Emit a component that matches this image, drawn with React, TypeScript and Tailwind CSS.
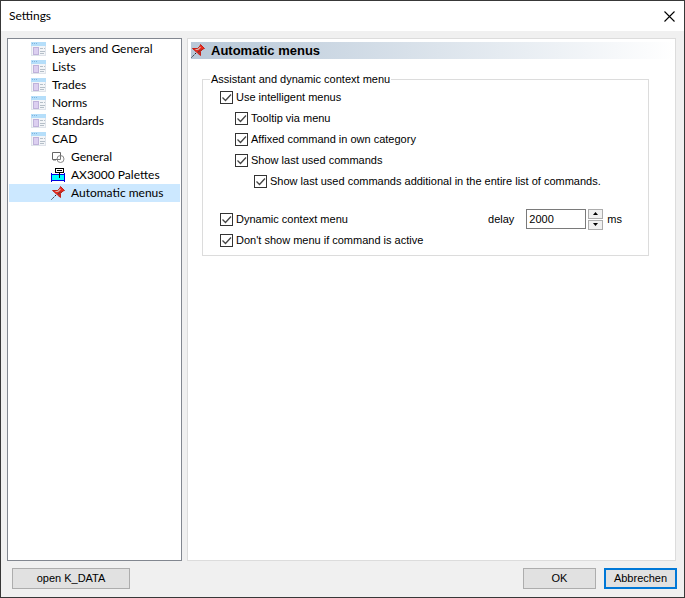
import { useState } from "react";
import type { ReactNode } from "react";

function WindowIcon() {
  return (
    <svg width="15" height="14" viewBox="0 0 15 14" shapeRendering="crispEdges" className="shrink-0">
      <rect width="15" height="14" fill="#dfe3ea" />
      <rect width="15" height="4" fill="#b5defa" />
      <rect x="1" y="1" width="1" height="1" fill="#7fb5dc" />
      <rect x="3" y="1" width="1" height="1" fill="#7fb5dc" />
      <rect x="5" y="1" width="1" height="1" fill="#7fb5dc" />
      <rect x="1" y="4" width="13" height="9" fill="#f3f5f8" />
      <rect x="2" y="5" width="6" height="8" fill="#bfb2da" />
      <rect x="3" y="6" width="4" height="6" fill="#dccff0" />
      <rect x="9" y="6" width="3" height="1" fill="#b5bfc8" />
      <rect x="13" y="6" width="1" height="1" fill="#b5bfc8" />
      <rect x="9" y="9" width="5" height="1" fill="#b5bfc8" />
      <rect x="9" y="11" width="4" height="1" fill="#b5bfc8" />
    </svg>
  );
}

function ShapesIcon() {
  return (
    <svg width="14" height="14" viewBox="0 0 14 14" fill="none" className="shrink-0">
      <path d="M1.5 2.5h8v7h-8z" fill="#fff" stroke="#666" />
      <path d="M2 10.5h3" stroke="#bbb" />
      <circle cx="9.5" cy="9" r="3.5" fill="#fff" stroke="#888" />
      <path d="M9.5 5v4.5H6" stroke="#777" />
    </svg>
  );
}

function PaletteIcon() {
  return (
    <svg width="14" height="14" viewBox="0 0 14 14" shapeRendering="crispEdges" className="shrink-0">
      <rect x="1" y="7" width="12" height="5" fill="#00ffff" />
      <path d="M0 6h14v1H0zM0 12h14v1H0zM0 5h1v9H0zM13 5h1v9h-1z" fill="#0000e0" />
      <rect x="4" y="0" width="9" height="5" fill="#000" />
      <rect x="5" y="1" width="7" height="3" fill="#fff" />
      <rect x="6" y="2" width="5" height="1" fill="#000" />
      <rect x="8" y="5" width="1" height="5" fill="#000" />
    </svg>
  );
}

function PinIcon() {
  return (
    <svg width="14" height="14" viewBox="0 0 14 14" className="shrink-0">
      <path d="M0.5 13.5L5 9" stroke="#222" strokeDasharray="1.5 1" />
      <path d="M9.5 .5L13.5 4.5 12 5 9.5 7.5 9.5 11.5 6.5 9 5 7.5 1.5 4.5 6.5 4.5 9 2z" fill="#ee2a1c" stroke="#c01810" strokeWidth=".9" />
      <path d="M9.5 3L7 5.5 4.5 5.5" fill="none" stroke="#d8b0a8" strokeWidth="1.2" />
      <path d="M11.5 4.5L8.5 7.5V9.5L6.5 7.5z" fill="#6b3a38" />
    </svg>
  );
}

const tree = [
  { label: "Layers and General", icon: <WindowIcon /> },
  { label: "Lists", icon: <WindowIcon /> },
  { label: "Trades", icon: <WindowIcon /> },
  { label: "Norms", icon: <WindowIcon /> },
  { label: "Standards", icon: <WindowIcon /> },
  { label: "CAD", icon: <WindowIcon /> },
  { label: "General", icon: <ShapesIcon />, child: true },
  { label: "AX3000 Palettes", icon: <PaletteIcon />, child: true },
  { label: "Automatic menus", icon: <PinIcon />, child: true },
];

function Check({ children, className = "" }: { children: ReactNode; className?: string }) {
  return (
    <label className={`flex h-[21px] items-center gap-[3px] whitespace-nowrap ${className}`}>
      <span className="relative size-[13px] shrink-0">
        <input type="checkbox" defaultChecked className="peer block size-[13px] appearance-none border border-[#333] bg-white" />
        <svg
          viewBox="0 0 13 13"
          fill="none"
          className="pointer-events-none absolute inset-0 hidden size-[13px] peer-checked:block"
        >
          <path d="M2.5 6.5l3 3 5.5-6" stroke="#444" strokeWidth="1.3" />
        </svg>
      </span>
      {children}
    </label>
  );
}

export default function App() {
  const [selected, setSelected] = useState("Automatic menus");
  const [delay, setDelay] = useState(2000);

  return (
    <div className="flex h-screen flex-col border border-[#383838] bg-[#f0f0f0] font-['Liberation_Sans',Arial,sans-serif] text-[11px] text-black">
      <header className="flex h-[30px] shrink-0 items-center justify-between bg-white pr-[5px] pl-2">
        <h1 className="font-[Lato,'Open_Sans',sans-serif] text-[12px]">Settings</h1>
        <button type="button" aria-label="Close" className="p-1">
          <svg width="11" height="11" viewBox="0 0 11 11">
            <path d="M.5 .5l10 10M10.5 .5l-10 10" stroke="#000" strokeWidth="1.1" />
          </svg>
        </button>
      </header>

      <div className="flex min-h-0 flex-1 gap-[5px] pt-[7px] pr-2 pl-1.5">
        <nav className="w-[175px] shrink-0 border border-[#828790] bg-white p-px font-[Lato,'Open_Sans',sans-serif] text-[12px]">
          <ul>
            {tree.map((item) => (
              <li key={item.label}>
                <button
                  type="button"
                  onClick={() => setSelected(item.label)}
                  className={`flex h-[18px] w-full items-center gap-1.5 whitespace-nowrap ${
                    item.child ? "pl-[42px]" : "pl-[22px]"
                  } ${selected === item.label ? "bg-[#cce8ff]" : ""}`}
                >
                  {item.icon}
                  {item.label}
                </button>
              </li>
            ))}
          </ul>
        </nav>

        <main className="min-w-0 flex-1 border border-[#dcdcdc] bg-white pt-[3px] pl-[3px]">
          <div className="flex h-[17px] items-center gap-1.5 bg-linear-to-r from-[#b8c8d8] to-white">
            <PinIcon />
            <h2 className="text-[13px] font-bold">Automatic menus</h2>
          </div>

          <fieldset className="mt-3 mr-[26px] ml-[11px] border border-[#dcdcdc] pb-1">
            <legend className="ml-[7px] px-px leading-4">Assistant and dynamic context menu</legend>
            <Check className="ml-[17px]">Use intelligent menus</Check>
            <Check className="ml-8">Tooltip via menu</Check>
            <Check className="ml-8">Affixed command in own category</Check>
            <Check className="ml-8">Show last used commands</Check>
            <Check className="ml-[51px]">Show last used commands additional in the entire list of commands.</Check>

            <div className="mt-4 mr-[26px] ml-[17px] flex h-[22px] items-center justify-between">
              <Check>Dynamic context menu</Check>
              <div className="flex items-center">
                <label htmlFor="delay" className="mr-3">
                  delay
                </label>
                <input
                  id="delay"
                  type="text"
                  value={delay}
                  onChange={(e) => setDelay(Number(e.target.value) || 0)}
                  className="h-5 w-[60px] border border-[#7a7a7a] bg-white px-0.5 text-[11px]"
                />
                <div className="mr-1 ml-0.5 flex flex-col gap-px">
                  <button
                    type="button"
                    aria-label="Increase delay"
                    onClick={() => setDelay(delay + 100)}
                    className="flex h-2.5 w-[15px] items-center justify-center border border-[#acacac] bg-[#f0f0f0]"
                  >
                    <svg width="5" height="3" viewBox="0 0 5 3">
                      <path d="M0 3L2.5 0 5 3z" />
                    </svg>
                  </button>
                  <button
                    type="button"
                    aria-label="Decrease delay"
                    onClick={() => setDelay(Math.max(0, delay - 100))}
                    className="flex h-2.5 w-[15px] items-center justify-center border border-[#acacac] bg-[#f0f0f0]"
                  >
                    <svg width="5" height="3" viewBox="0 0 5 3">
                      <path d="M0 0L2.5 3 5 0z" />
                    </svg>
                  </button>
                </div>
                <span>ms</span>
              </div>
            </div>
            <Check className="ml-[17px]">Don't show menu if command is active</Check>
          </fieldset>
        </main>
      </div>

      <footer className="flex shrink-0 gap-2 pt-[7px] pr-[7px] pb-2 pl-[11px]">
        <button type="button" className="mr-auto h-[21px] w-[118px] border border-[#adadad] bg-[#e1e1e1]">
          open K_DATA
        </button>
        <button type="button" className="h-[21px] w-[73px] border border-[#adadad] bg-[#e1e1e1]">
          OK
        </button>
        <button type="button" className="h-[21px] w-[73px] border-2 border-[#0078d7] bg-[#e1e1e1]">
          Abbrechen
        </button>
      </footer>
    </div>
  );
}
